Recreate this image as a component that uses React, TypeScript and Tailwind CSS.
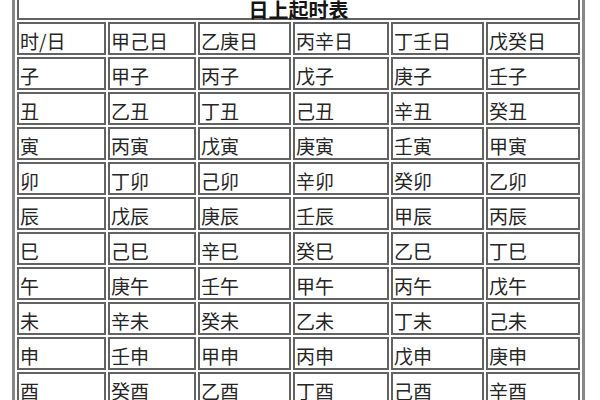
const header = ['时/日', '甲己日', '乙庚日', '丙辛日', '丁壬日', '戊癸日']

const rows: string[][] = [
  ['子', '甲子', '丙子', '戊子', '庚子', '壬子'],
  ['丑', '乙丑', '丁丑', '己丑', '辛丑', '癸丑'],
  ['寅', '丙寅', '戊寅', '庚寅', '壬寅', '甲寅'],
  ['卯', '丁卯', '己卯', '辛卯', '癸卯', '乙卯'],
  ['辰', '戊辰', '庚辰', '壬辰', '甲辰', '丙辰'],
  ['巳', '己巳', '辛巳', '癸巳', '乙巳', '丁巳'],
  ['午', '庚午', '壬午', '甲午', '丙午', '戊午'],
  ['未', '辛未', '癸未', '乙未', '丁未', '己未'],
  ['申', '壬申', '甲申', '丙申', '戊申', '庚申'],
  ['酉', '癸酉', '乙酉', '丁酉', '己酉', '辛酉'],
  ['戌', '甲戌', '丙戌', '戊戌', '庚戌', '壬戌'],
  ['亥', '乙亥', '丁亥', '己亥', '辛亥', '癸亥'],
]

function Cell({ text }: { text: string }) {
  return (
    <div className="h-[33px] border-2 border-[#636363] bg-white flex items-center pl-[1px] pt-[3px] text-[19px] leading-none text-[#262626]">
      {text}
    </div>
  )
}

export default function App() {
  return (
    <div
      className="h-[400px] w-[600px] overflow-hidden bg-white"
      style={{ fontFamily: '"Noto Sans CJK SC", "Noto Sans", sans-serif' }}
    >
      <div className="ml-[12px] mt-[-18px] w-fit border-[3px] border-[#878787] p-[2px] bg-white">
        <div className="grid grid-cols-[89px_88px_93px_96px_93px_94px] gap-[2px]">
          {/* title row */}
          <div className="col-span-6 h-[33px] border-2 border-[#636363] flex items-end justify-center text-[20px] leading-[16px] font-bold text-[#151515]">
            日上起时表
          </div>
          {header.map((h) => (
            <Cell key={h} text={h} />
          ))}
          {rows.map((r) => r.map((c, i) => <Cell key={r[0] + i} text={c} />))}
        </div>
      </div>
    </div>
  )
}
